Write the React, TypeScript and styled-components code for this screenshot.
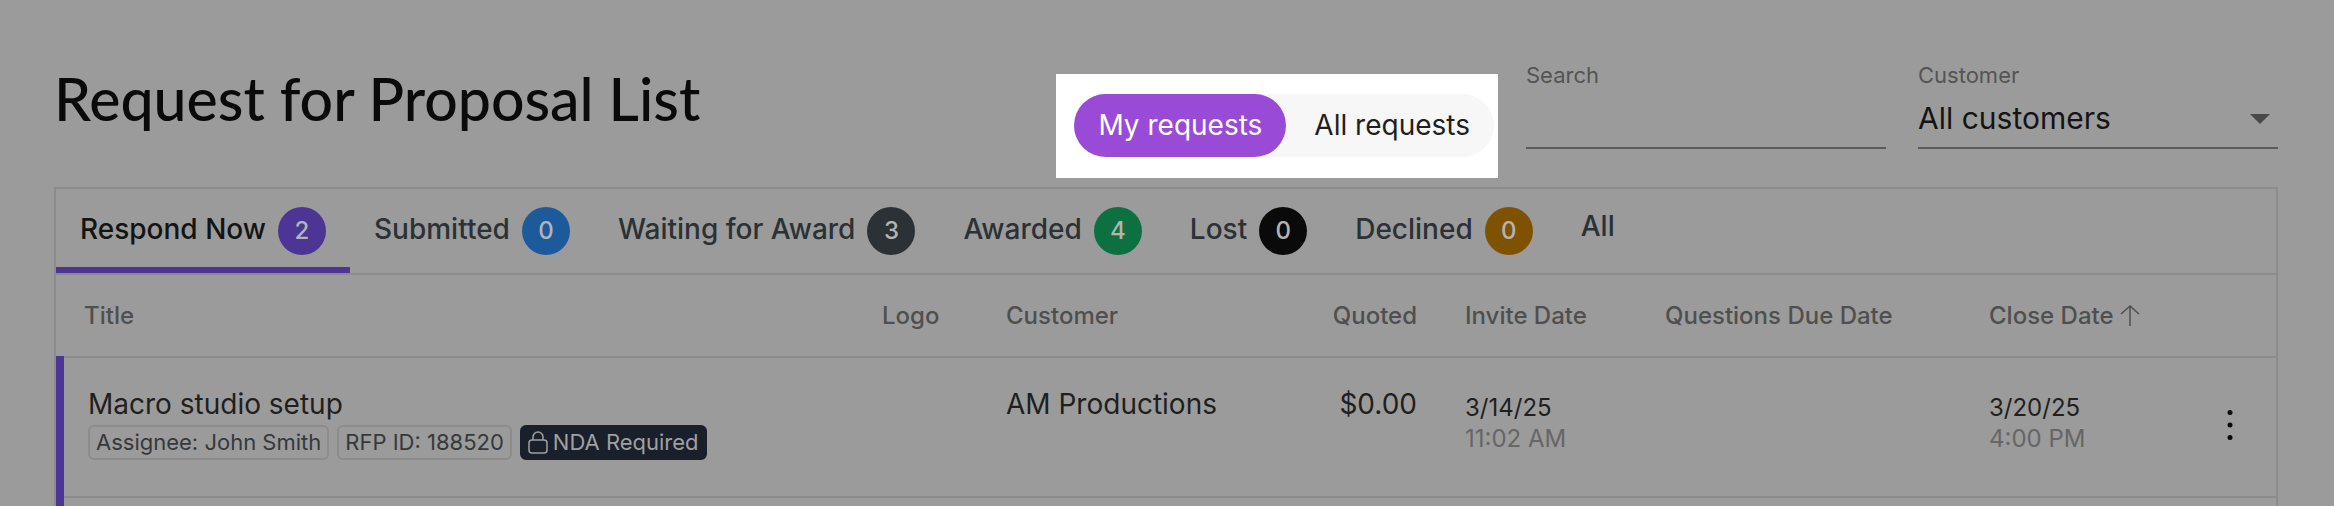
import React from 'react';
import styled, { createGlobalStyle } from 'styled-components';

const GlobalStyle = createGlobalStyle`
  *, *::before, *::after { box-sizing: border-box; }
  body {
    margin: 0;
    background: #9b9b9b;
    color: #1f1f1f;
    font-family: Inter, "Liberation Sans", sans-serif;
    font-size: 28px;
  }
  button, input, select { font: inherit; color: inherit; }
  button { border: 0; padding: 0; background: none; cursor: pointer; }
`;

const Page = styled.main`
  height: 100vh;
  overflow: hidden;
  padding: 0 56px 0 54px;
`;

const Header = styled.header`
  display: flex;
  align-items: flex-start;
  padding: 61px 0 9px;
`;

const Title = styled.h1`
  margin: 0 auto 0 0;
  color: #0a0a0a;
  font-family: Lato, Inter, sans-serif;
  font-size: 59px;
  font-weight: 500;
  line-height: 76px;
  white-space: nowrap;
`;

const Spotlight = styled.div`
  margin: 13px 28px 0 24px;
  padding: 20px 4px 21px 18px;
  background: #ffffff;
`;

const Toggle = styled.div`
  display: flex;
  gap: 4px;
  border-radius: 32px;
  background: #f7f7f7;
`;

const ToggleButton = styled.button<{ $active?: boolean }>`
  height: 63px;
  padding: 0 24px 2px;
  border-radius: 32px;
  background: ${({ $active }) => ($active ? '#994bd8' : 'transparent')};
  color: ${({ $active }) => ($active ? '#ffffff' : '#1f1f1f')};
  white-space: nowrap;
`;

const Fields = styled.div`
  display: flex;
  gap: 32px;
`;

const Field = styled.div`
  position: relative;
  display: flex;
  flex-direction: column;
  width: 360px;
`;

const FieldLabel = styled.label`
  color: #545454;
  font-size: 22px;
  line-height: 28px;
`;

const fieldControl = `
  width: 100%;
  height: 60px;
  padding: 0;
  border: 0;
  border-bottom: 2px solid #5c5c5c;
  border-radius: 0;
  outline: 0;
  background: transparent;
  color: #141414;
  font-size: 30px;
  appearance: none;
`;

const SearchInput = styled.input`${fieldControl}`;
const CustomerSelect = styled.select`${fieldControl}`;

const Caret = styled.svg`
  position: absolute;
  right: 8px;
  bottom: 25px;
  pointer-events: none;
`;

const Card = styled.section`
  border: solid #8c8c90;
  border-width: 2px 2px 0;
`;

const Tabs = styled.div`
  display: flex;
  align-items: stretch;
  height: 84px;
`;

const Tab = styled.button<{ $active?: boolean }>`
  display: flex;
  align-items: flex-start;
  padding: 18px 24px 0;
  border-bottom: 6px solid ${({ $active }) => ($active ? '#4c3594' : 'transparent')};
  color: ${({ $active }) => ($active ? '#141414' : '#2b3135')};
  font-weight: 500;
  line-height: 38px;
  white-space: nowrap;
`;

const Badge = styled.span<{ $color: string }>`
  display: inline-block;
  width: 48px;
  height: 48px;
  margin-left: 12px;
  border-radius: 50%;
  background: ${({ $color }) => $color};
  color: #b4b4b4;
  font-size: 24px;
  line-height: 48px;
  text-align: center;
  vertical-align: middle;
`;

const Table = styled.table`
  width: 100%;
  border-spacing: 0;
  border-top: 2px solid #8c8c8e;
  table-layout: fixed;
`;

const Col = styled.col<{ $width?: number }>`
  width: ${({ $width }) => ($width ? `${$width}px` : 'auto')};
`;

const HeadCell = styled.th<{ $align?: string; $first?: boolean }>`
  height: 81px;
  padding: 0 24px 0 ${({ $first }) => ($first ? 28 : 24)}px;
  color: #4f4f4f;
  font-size: 24px;
  font-weight: 500;
  text-align: ${({ $align }) => $align ?? 'left'};
  white-space: nowrap;
`;

const SortArrow = styled.svg`
  margin-left: 6px;
  vertical-align: -2px;
`;

const AccentCell = styled.td`
  padding: 0;
  background: #4c3594;
`;

const Cell = styled.td<{ $align?: string }>`
  height: 140px;
  padding: 26px 24px 0;
  border-top: 2px solid #8c8c8c;
  line-height: 40px;
  text-align: ${({ $align }) => $align ?? 'left'};
  vertical-align: top;
  white-space: nowrap;
`;

const DateCell = styled(Cell)`
  padding-top: 34px;
  font-size: 24px;
  line-height: 31px;
`;

const ActionCell = styled(Cell)`
  padding: 0 24px;
  text-align: right;
  vertical-align: middle;
`;

const Time = styled.div`
  color: #666666;
`;

const Chips = styled.div`
  display: flex;
  gap: 8px;
  padding-top: 1px;
`;

const Chip = styled.span<{ $dark?: boolean }>`
  display: flex;
  align-items: center;
  gap: 5px;
  height: 35px;
  padding: 0 6px;
  border: 2px solid ${({ $dark }) => ($dark ? '#1a1f2c' : '#8c8c8c')};
  border-radius: 6px;
  background: ${({ $dark }) => ($dark ? '#1a1f2c' : 'transparent')};
  color: ${({ $dark }) => ($dark ? '#a0a0a0' : '#34393c')};
  font-size: 22px;
  line-height: 31px;
`;

const MenuButton = styled.button`
  display: inline-flex;
  align-items: center;
  justify-content: center;
  width: 44px;
  height: 44px;
`;

const tabs = [
  { label: 'Respond Now', count: 2, color: '#4c3594' },
  { label: 'Submitted', count: 0, color: '#1c5a9c' },
  { label: 'Waiting for Award', count: 3, color: '#2b3135' },
  { label: 'Awarded', count: 4, color: '#0d7040' },
  { label: 'Lost', count: 0, color: '#0a0a0a' },
  { label: 'Declined', count: 0, color: '#7f5200' },
  { label: 'All' },
];

const LockIcon = () => (
  <svg width="20" height="23" viewBox="0 0 20 23" fill="none" stroke="currentColor" strokeWidth="1.5" aria-hidden="true">
    <rect x="1" y="9" width="18" height="13" rx="3" />
    <path d="M5 9V6a5 5 0 0 1 10 0v3" />
  </svg>
);

export default function App() {
  return (
    <>
      <GlobalStyle />
      <Page>
        <Header>
          <Title>Request for Proposal List</Title>
          <Spotlight>
            <Toggle role="group" aria-label="Request scope">
              <ToggleButton $active aria-pressed="true">My requests</ToggleButton>
              <ToggleButton aria-pressed="false">All requests</ToggleButton>
            </Toggle>
          </Spotlight>
          <Fields>
            <Field>
              <FieldLabel htmlFor="search">Search</FieldLabel>
              <SearchInput id="search" type="text" />
            </Field>
            <Field>
              <FieldLabel htmlFor="customer">Customer</FieldLabel>
              <CustomerSelect id="customer">
                <option>All customers</option>
              </CustomerSelect>
              <Caret width="20" height="10" viewBox="0 0 20 10" aria-hidden="true">
                <path d="M0 0h20L10 10z" fill="#484848" />
              </Caret>
            </Field>
          </Fields>
        </Header>

        <Card>
          <Tabs role="tablist">
            {tabs.map(({ label, count, color }, index) => (
              <Tab key={label} role="tab" aria-selected={index === 0} $active={index === 0}>
                <span>
                  {label}
                  {color && <Badge $color={color}>{count}</Badge>}
                </span>
              </Tab>
            ))}
          </Tabs>

          <Table>
            <colgroup>
              <Col $width={8} />
              <Col />
              <Col $width={124} />
              <Col $width={299} />
              <Col $width={160} />
              <Col $width={200} />
              <Col $width={324} />
              <Col $width={200} />
              <Col $width={111} />
            </colgroup>
            <thead>
              <tr>
                <HeadCell colSpan={2} $first>Title</HeadCell>
                <HeadCell>Logo</HeadCell>
                <HeadCell>Customer</HeadCell>
                <HeadCell $align="right">Quoted</HeadCell>
                <HeadCell>Invite Date</HeadCell>
                <HeadCell>Questions Due Date</HeadCell>
                <HeadCell aria-sort="ascending">
                  Close Date
                  <SortArrow width="20" height="22" viewBox="0 0 20 22" fill="none" stroke="currentColor" strokeWidth="1.5" aria-hidden="true">
                    <path d="M10 22V2M1 10l9-8 9 8" />
                  </SortArrow>
                </HeadCell>
                <HeadCell />
              </tr>
            </thead>
            <tbody>
              <tr>
                <AccentCell />
                <Cell>
                  Macro studio setup
                  <Chips>
                    <Chip>Assignee: John Smith</Chip>
                    <Chip>RFP ID: 188520</Chip>
                    <Chip $dark><LockIcon />NDA Required</Chip>
                  </Chips>
                </Cell>
                <Cell />
                <Cell>AM Productions</Cell>
                <Cell $align="right">$0.00</Cell>
                <DateCell>
                  3/14/25
                  <Time>11:02 AM</Time>
                </DateCell>
                <Cell />
                <DateCell>
                  3/20/25
                  <Time>4:00 PM</Time>
                </DateCell>
                <ActionCell>
                  <MenuButton aria-label="Row actions">
                    <svg width="6" height="32" viewBox="0 0 6 32" fill="#0a0a0a" aria-hidden="true">
                      <circle cx="3" cy="3.5" r="2.5" />
                      <circle cx="3" cy="16" r="2.5" />
                      <circle cx="3" cy="28.5" r="2.5" />
                    </svg>
                  </MenuButton>
                </ActionCell>
              </tr>
              <tr>
                <AccentCell />
                <Cell colSpan={8} />
              </tr>
            </tbody>
          </Table>
        </Card>
      </Page>
    </>
  );
}
